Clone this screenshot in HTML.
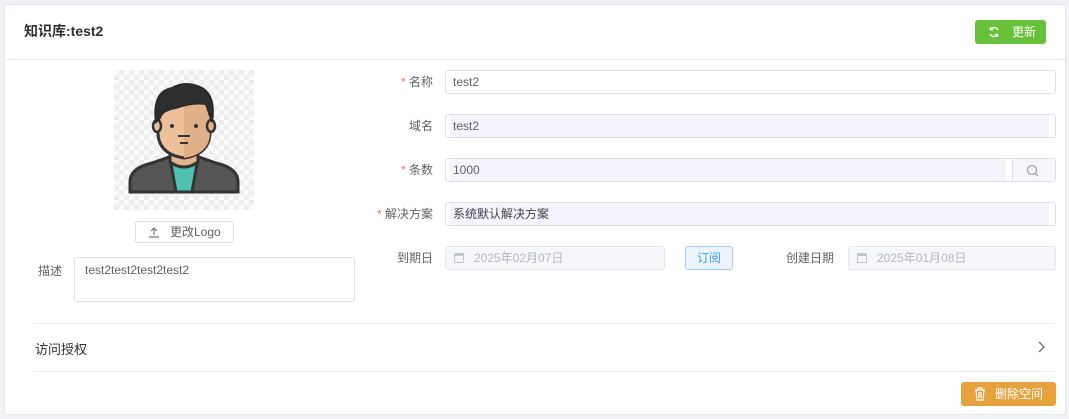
<!DOCTYPE html><html><head><meta charset="utf-8"><style>
*{box-sizing:border-box;margin:0;padding:0}
body{width:1069px;height:419px;background:#f0f2f5;font-family:"Liberation Sans","Noto Sans CJK SC",sans-serif;font-size:12px;color:#606266;position:relative;overflow:hidden}
.card{position:absolute;left:4px;top:4px;width:1062px;height:411px;background:#fff;border:1px solid #e4e7ed;border-radius:3px}
.a{position:absolute}
.inp{position:absolute;height:24px;border:1px solid #dcdfe6;border-radius:3px;padding-left:7px;line-height:22px;color:#606266}
.lab{position:absolute;text-align:right;width:100px;line-height:24px}
.req:before{content:"* ";color:#f56c6c}
.dis{background:#f5f7fa;border-color:#e4e7ed;color:#b5b8bf;padding-left:28px}
.cal{position:absolute;left:8px;top:6px;width:10px;height:10px;border:1px solid #c0c4cc;border-top-width:3px;border-radius:1px}
</style></head><body>
<div class="card"></div>
<div class="a" style="left:24px;top:21px;font-size:14px;font-weight:bold;color:#303133">知识库:test2</div>
<div class="a" style="left:975px;top:20px;width:71px;height:24px;background:#67c23a;border-radius:3px;color:#fff;line-height:24px;padding-left:37px">更新</div>
<svg class="a" style="left:988px;top:26px" width="12" height="12" viewBox="0 0 12 12" fill="none" stroke="#fff" stroke-width="1.4"><path d="M10 4A4.3 4.3 0 0 0 2.5 3.5M2 8a4.3 4.3 0 0 0 7.5.5"/><path d="M2.5 1v2.7h2.7M9.5 11V8.3H6.8"/></svg>
<div class="a" style="left:5px;top:59px;width:1060px;height:1px;background:#ebeef5"></div>
<div class="a" style="left:114px;top:70px;width:140px;height:140px;background-color:#fafafa;background-image:linear-gradient(45deg,#eee 25%,transparent 25%,transparent 75%,#eee 75%),linear-gradient(45deg,#eee 25%,transparent 25%,transparent 75%,#eee 75%);background-size:10px 10px;background-position:0 0,5px 5px"></div>
<svg class="a" style="left:114px;top:70px" width="140" height="140" viewBox="0 0 140 140">
<path d="M16 112 Q16 98 38 93 L58 86 L82 86 L102 93 Q124 98 124 112 L124 122 L16 122Z" fill="#555" stroke="#333" stroke-width="3"/>
<path d="M56 88 L84 88 L78 122 L62 122Z" fill="#4fc1b0" stroke="#333" stroke-width="3"/>
<path d="M56 76 L56 92 Q70 102 84 92 L84 76Z" fill="#e4b48c" stroke="#333" stroke-width="3"/>
<path d="M44 45 Q44 24 70 24 Q96 24 96 45 L96 62 Q96 84 70 88 Q44 84 44 62Z" fill="#ebc09a" stroke="#333" stroke-width="3"/>
<path d="M70 24 Q96 24 96 45 L96 62 Q96 84 70 88Z" fill="#e0b088"/>
<ellipse cx="43" cy="56" rx="4" ry="6" fill="#ebc09a" stroke="#333" stroke-width="2.5"/>
<ellipse cx="97" cy="56" rx="4" ry="6" fill="#e0b088" stroke="#333" stroke-width="2.5"/>
<path d="M42 52 Q38 22 58 18 Q72 10 88 18 Q102 26 98 52 Q94 40 92 34 Q78 32 62 38 Q48 40 46 48Z" fill="#2e2e2e" stroke="#2a2a2a" stroke-width="2"/>
<circle cx="58" cy="56" r="2" fill="#333"/><circle cx="82" cy="56" r="2" fill="#333"/>
<path d="M64 66 H76 M66 73 H74" stroke="#333" stroke-width="2"/>
</svg>
<div class="a" style="left:135px;top:221px;width:99px;height:22px;border:1px solid #dcdfe6;border-radius:3px;line-height:20px;padding-left:34px;color:#606266">更改Logo</div>
<svg class="a" style="left:148px;top:226px" width="12" height="12" viewBox="0 0 12 12" stroke="#777" stroke-width="1.2" fill="none"><path d="M6 9V2M3 5l3-3 3 3M1 11h10"/></svg>
<div class="a" style="left:38px;top:262px">描述</div>
<div class="a" style="left:74px;top:257px;width:281px;height:45px;border:1px solid #dcdfe6;border-radius:3px;padding:5px 10px;color:#606266">test2test2test2test2</div>
<div class="lab req" style="left:333px;top:70px">名称</div>
<div class="inp" style="left:445px;top:70px;width:611px">test2</div>
<div class="lab" style="left:333px;top:114px">域名</div>
<div class="inp" style="left:445px;top:114px;width:611px;background:linear-gradient(90deg,#fff 4px,#f3f4fc 4px,#f3f4fc calc(100% - 6px),#fff calc(100% - 6px))">test2</div>
<div class="lab req" style="left:333px;top:158px">条数</div>
<div class="inp" style="left:445px;top:158px;width:611px;background:linear-gradient(90deg,#fff 4px,#f3f4fc 4px,#f3f4fc 560px,#fff 560px)">1000</div>
<div class="a" style="left:1012px;top:159px;width:1px;height:22px;background:#dcdfe6"></div>
<div class="a" style="left:1013px;top:159px;width:42px;height:22px;background:#f5f7fa"></div>
<svg class="a" style="left:1026px;top:164px" width="13" height="13" viewBox="0 0 13 13" fill="none" stroke="#999" stroke-width="1.1"><circle cx="6" cy="6" r="4.5"/><path d="M9.3 9.3l2.5 2.5"/></svg>
<div class="lab req" style="left:333px;top:202px">解决方案</div>
<div class="inp" style="left:445px;top:202px;width:611px;background:linear-gradient(90deg,#fff 4px,#f3f4fc 4px,#f3f4fc calc(100% - 6px),#fff calc(100% - 6px));color:#444">系统默认解决方案</div>
<div class="lab" style="left:333px;top:246px">到期日</div>
<div class="inp dis" style="left:445px;top:246px;width:220px"><span class="cal"></span>2025年02月07日</div>
<div class="a" style="left:685px;top:246px;width:48px;height:24px;border:1px solid #a0cfff;background:#ecf5ff;color:#409eff;border-radius:3px;text-align:center;line-height:22px">订阅</div>
<div class="lab" style="left:734px;top:246px">创建日期</div>
<div class="inp dis" style="left:848px;top:246px;width:208px"><span class="cal"></span>2025年01月08日</div>
<div class="a" style="left:34px;top:323px;width:1021px;height:1px;background:#ebeef5"></div>
<div class="a" style="left:35px;top:339px;font-size:13px;color:#303133">访问授权</div>
<svg class="a" style="left:1036px;top:341px" width="10" height="12" viewBox="0 0 10 12" fill="none" stroke="#555" stroke-width="1.2"><path d="M3 1l5 5-5 5"/></svg>
<div class="a" style="left:34px;top:371px;width:1021px;height:1px;background:#ebeef5"></div>
<div class="a" style="left:961px;top:382px;width:95px;height:24px;background:#e6a23c;border-radius:3px;color:#fff;line-height:24px;padding-left:34px">删除空间</div>
<svg class="a" style="left:974px;top:387px" width="12" height="14" viewBox="0 0 12 14" fill="none" stroke="#fff" stroke-width="1.2"><path d="M1 3h10M4 3V1h4v2M2 3l1 10h6l1-10M5 5v6M7 5v6"/></svg>
</body></html>
